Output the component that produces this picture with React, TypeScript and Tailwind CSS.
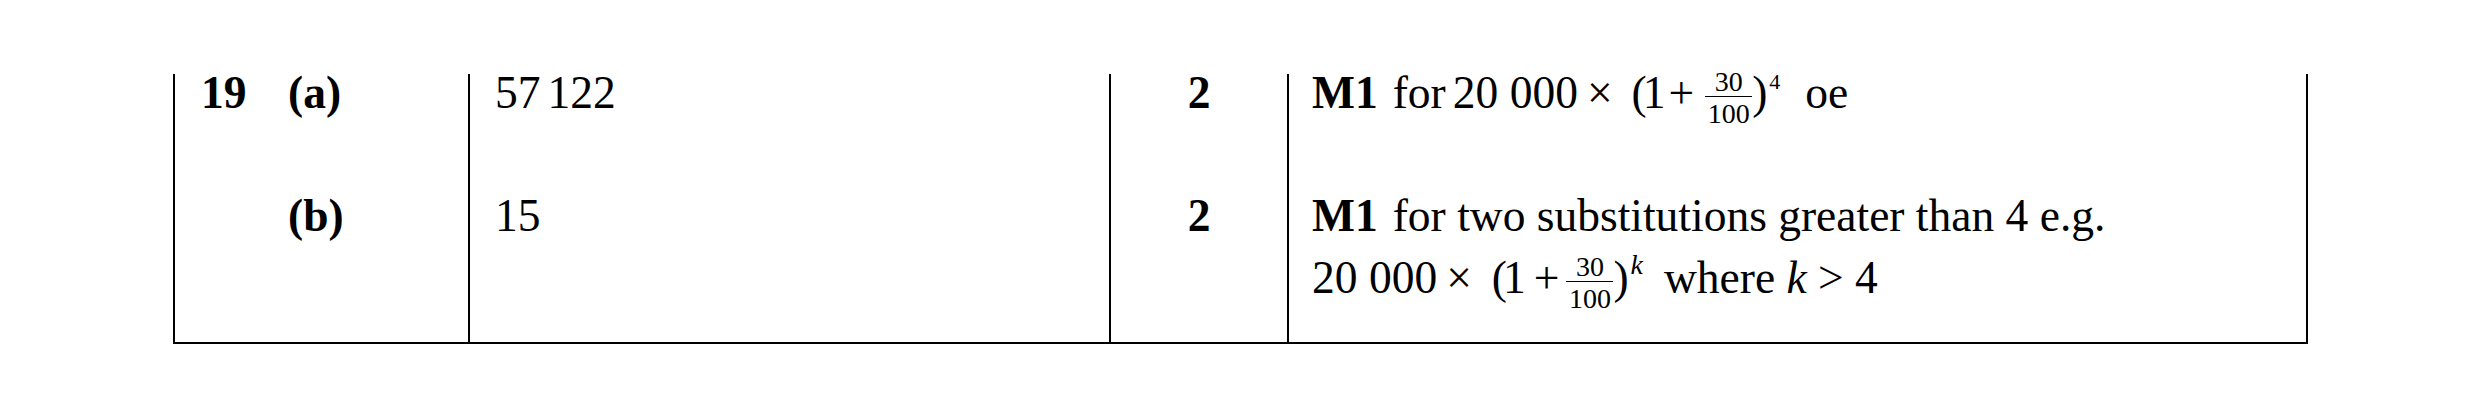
import React from "react";

function Frac({ className = "" }: { className?: string }) {
  return (
    <span className={"inline-block text-center text-[28px] align-[-15px] " + className}>
      <span className="block leading-[22px]">30</span>
      <span className="block w-[47px] h-[1.5px] bg-black mt-[3px]" />
      <span className="block leading-[22px] mt-[6px]">100</span>
    </span>
  );
}

export default function App() {
  return (
    <div className="w-[2480px] h-[420px] bg-white text-black [font-family:'Liberation_Serif',serif] text-[45.5px] pt-[74px] pl-[173px]">
      <div className="grid w-[2135px] grid-cols-[295px_641px_178px_1021px] border-b-2 border-black">
        {/* Row a */}
        <div className="h-[122px] border-l-2 border-black">
          <div className="-mt-[12px] leading-[62px] pl-[26px] flex font-bold whitespace-nowrap">
            <span className="w-[87px]">19</span>
            <span>(a)</span>
          </div>
        </div>
        <div className="h-[122px] border-l-2 border-black">
          <div className="-mt-[12px] leading-[62px] pl-[25px] whitespace-nowrap">
            57<span className="ml-[7px]">122</span>
          </div>
        </div>
        <div className="h-[122px] border-l-2 border-black">
          <div className="-mt-[12px] leading-[62px] text-center font-bold">2</div>
        </div>
        <div className="h-[122px] border-l-2 border-r-2 border-black">
          <div className="-mt-[12px] leading-[62px] pl-[23px] whitespace-nowrap">
            <span className="font-bold">M1</span>
            <span className="ml-[15px]">for</span>
            <span className="ml-[7px]">20 000</span>
            <span className="ml-[9px]">×</span>
            <span className="ml-[19px]">(</span>
            <span className="ml-[-4px]">1</span>
            <span className="ml-[3px]">+</span>
            <Frac className="ml-[11px]" />
            <span>)</span>
            <span className="text-[22px] leading-none align-[19px] ml-[2px]">4</span>
            <span className="ml-[25px]">oe</span>
          </div>
        </div>

        {/* Row b */}
        <div className="h-[146px] border-l-2 border-black">
          <div className="-mt-[11px] leading-[62px] pl-[113px] font-bold whitespace-nowrap">(b)</div>
        </div>
        <div className="h-[146px] border-l-2 border-black">
          <div className="-mt-[11px] leading-[62px] pl-[25px]">15</div>
        </div>
        <div className="h-[146px] border-l-2 border-black">
          <div className="-mt-[11px] leading-[62px] text-center font-bold">2</div>
        </div>
        <div className="h-[146px] border-l-2 border-r-2 border-black">
          <div className="-mt-[11px] leading-[62px] pl-[23px] whitespace-nowrap">
            <div>
              <span className="font-bold">M1</span>
              <span className="ml-[15px]">for two substitutions greater than 4 e.g.</span>
            </div>
            <div>
              <span>20 000</span>
              <span className="ml-[9px]">×</span>
              <span className="ml-[20px]">(</span>
              <span className="ml-[-4px]">1</span>
              <span className="ml-[8px]">+</span>
              <Frac className="ml-[7px]" />
              <span>)</span>
              <span className="italic text-[28px] leading-none align-[19px] ml-[2px]">k</span>
              <span className="ml-[21px]">where</span>{" "}
              <span className="italic">k</span> &gt; 4
            </div>
          </div>
        </div>
      </div>
    </div>
  );
}
